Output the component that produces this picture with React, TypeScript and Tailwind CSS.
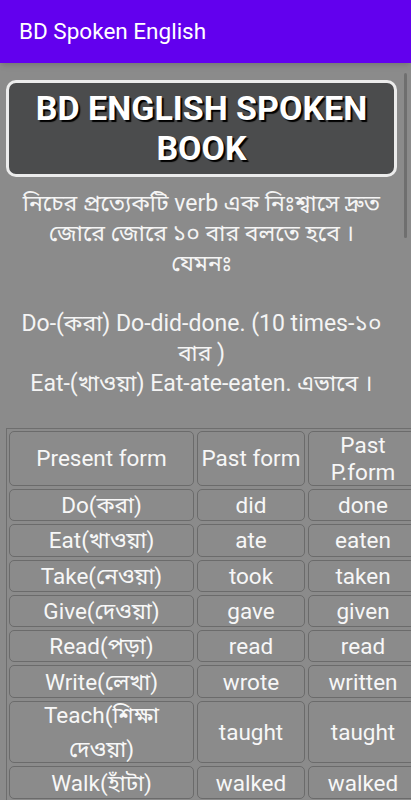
const rows: { present: string[]; past: string; pp: string; tall?: boolean }[] = [
  { present: ['Do(করা)'], past: 'did', pp: 'done' },
  { present: ['Eat(খাওয়া)'], past: 'ate', pp: 'eaten' },
  { present: ['Take(নেওয়া)'], past: 'took', pp: 'taken' },
  { present: ['Give(দেওয়া)'], past: 'gave', pp: 'given' },
  { present: ['Read(পড়া)'], past: 'read', pp: 'read' },
  { present: ['Write(লেখা)'], past: 'wrote', pp: 'written' },
  { present: ['Teach(শিক্ষা', 'দেওয়া)'], past: 'taught', pp: 'taught', tall: true },
  { present: ['Walk(হাঁটা)'], past: 'walked', pp: 'walked' },
]

function Cell({ lines, tall }: { lines: string[]; tall?: boolean }) {
  return (
    <div
      className={
        'border border-[#6b6b6b] rounded-[5px] flex flex-col items-center justify-center text-center text-[22.5px] text-[#f7f7f7] whitespace-nowrap ' +
        (tall ? 'h-[62.7px] leading-[34px]' : 'h-[32.3px] leading-[26px]')
      }
    >
      {lines.map(l => (
        <span key={l}>{l}</span>
      ))}
    </div>
  )
}

export default function App() {
  return (
    <div className="h-[800px] overflow-hidden relative bg-[#8b8b8b] font-['Roboto','Noto_Sans','Noto_Sans_Bengali',sans-serif]">
      {/* App bar */}
      <header className="h-[63px] bg-[#6200ee] flex items-center pl-[19px] text-[22.5px] text-white shadow-md relative z-10">
        BD Spoken English
      </header>

      <main className="ml-[6px] w-[391px]">
        {/* Title box */}
        <div className="mt-[17px] border-[3px] border-[#ececec] rounded-[10px] bg-[#4b4c4d] pt-[5px] pb-[6px] text-center text-[34px] leading-[40px] font-bold text-white [text-shadow:2px_2px_1px_#000]">
          BD ENGLISH SPOKEN
          <br />
          BOOK
        </div>

        {/* Intro text */}
        <p className="mt-[12px] text-center text-[23px] leading-[30px] text-[#f4f4f4] whitespace-nowrap">
          নিচের প্রত্যেকটি verb এক নিঃশ্বাসে দ্রুত
          <br />
          জোরে জোরে ১০ বার বলতে হবে ।
          <br />
          যেমনঃ
          <br />
          <br />
          Do-(করা) Do-did-done. (10 times-১০
          <br />
          বার )
          <br />
          Eat-(খাওয়া) Eat-ate-eaten. এভাবে ।
        </p>

        {/* Verb table */}
        <div className="mt-[29px] w-[416px] border border-[#6e6e6e] p-[2px] grid grid-cols-[185px_108px_110px] gap-[3px]">
          <div className="h-[55px] border border-[#6b6b6b] rounded-[5px] flex items-center justify-center text-[22.5px] text-[#f7f7f7]">
            Present form
          </div>
          <div className="h-[55px] border border-[#6b6b6b] rounded-[5px] flex items-center justify-center text-[22.5px] text-[#f7f7f7] whitespace-nowrap">
            Past form
          </div>
          <div className="h-[55px] border border-[#6b6b6b] rounded-[5px] flex flex-col items-center justify-center text-[22.5px] leading-[27px] text-[#f7f7f7]">
            <span>Past</span>
            <span>P.form</span>
          </div>
          {rows.map(r => (
            <>
              <Cell key={r.present[0]} lines={r.present} tall={r.tall} />
              <Cell key={r.present[0] + 'p'} lines={[r.past]} tall={r.tall} />
              <Cell key={r.present[0] + 'pp'} lines={[r.pp]} tall={r.tall} />
            </>
          ))}
        </div>
      </main>

      {/* Scroll indicator */}
      <div className="absolute left-[404px] top-[73px] w-[3px] h-[165px] bg-[#6f6f6f] rounded-sm" />
    </div>
  )
}
